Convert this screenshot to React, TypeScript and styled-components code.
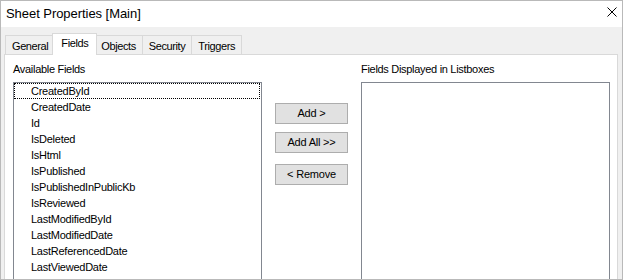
import React from "react";
import styled, { createGlobalStyle } from "styled-components";

const Global = createGlobalStyle`
  html, body { margin: 0; padding: 0; background: #ffffff; }
  * { box-sizing: border-box; }
`;

const Window = styled.div`
  width: 623px;
  height: 280px;
  border: 1px solid #b9b9b9;
  background: #f0f0f0;
  overflow: hidden;
  display: flex;
  flex-direction: column;
  font-family: "Liberation Sans", Arial, sans-serif;
  color: #000;
`;

const TitleBar = styled.div`
  height: 26px;
  flex: none;
  background: #ffffff;
  display: flex;
  align-items: center;
  justify-content: space-between;
  padding: 0 5px 0 5px;
`;

const Title = styled.div`
  font-size: 13px;
  letter-spacing: -0.05px;
  line-height: 16px;
`;

const CloseIcon = styled.svg`
  width: 10px;
  height: 10px;
  align-self: flex-start;
  margin-top: 6px;
`;

const Body = styled.div`
  flex: 1;
  display: flex;
  flex-direction: column;
  padding: 6px 4px 0 3px;
  min-height: 0;
`;

const TabStrip = styled.div`
  display: flex;
  align-items: flex-end;
  height: 21px;
  padding-left: 1px;
  flex: none;
`;

const Tab = styled.div<{ $active?: boolean }>`
  position: relative;
  border: 1px solid #d9d9d9;
  border-bottom: none;
  font-size: 11px;
  line-height: 13px;
  letter-spacing: -0.4px;
  white-space: nowrap;
  background: ${(p) => (p.$active ? "#ffffff" : "#f0f0f0")};
  height: ${(p) => (p.$active ? "22px" : "19px")};
  padding: ${(p) => (p.$active ? "3px 8px 0 8px" : "4px 6px 0 6px")};
  margin: ${(p) => (p.$active ? "0 -2px -1px -3px" : "0 0 0 -1px")};
  z-index: ${(p) => (p.$active ? 2 : 1)};
  &:first-child { margin-left: 0; }
`;

const Panel = styled.div`
  flex: 1;
  background: #ffffff;
  border: 1px solid #d9d9d9;
  padding: 8px 7px 0 8px;
  display: flex;
  gap: 13px;
  min-height: 240px;
`;

const Column = styled.div`
  width: 249px;
  flex: none;
  display: flex;
  flex-direction: column;
`;

const Label = styled.div`
  font-size: 11px;
  line-height: 13px;
  letter-spacing: -0.3px;
  height: 13px;
  margin-bottom: 6px;
`;

const ListBox = styled.div`
  border: 1px solid #828790;
  background: #ffffff;
  height: 220px;
  overflow: hidden;
`;

const ListRow = styled.div<{ $focused?: boolean }>`
  height: 16px;
  border: 1px dotted ${(p) => (p.$focused ? "#000" : "transparent")};
  margin-right: 1px;
  padding-left: 16px;
  font-size: 11px;
  line-height: 14px;
  letter-spacing: -0.25px;
  white-space: nowrap;
`;

const ButtonColumn = styled.div`
  width: 73px;
  flex: none;
  display: flex;
  flex-direction: column;
  padding-top: 40px;
`;

const Button = styled.button<{ $gap?: number }>`
  height: 21px;
  width: 73px;
  margin: ${(p) => p.$gap ?? 0}px 0 0 0;
  padding: 0;
  border: 1px solid #adadad;
  background: #e1e1e1;
  font-family: "Liberation Sans", Arial, sans-serif;
  font-size: 11px;
  letter-spacing: -0.2px;
  color: #000;
  line-height: 19px;
  text-align: center;
`;

const fields = [
  "CreatedById",
  "CreatedDate",
  "Id",
  "IsDeleted",
  "IsHtml",
  "IsPublished",
  "IsPublishedInPublicKb",
  "IsReviewed",
  "LastModifiedById",
  "LastModifiedDate",
  "LastReferencedDate",
  "LastViewedDate",
];

const tabs = ["General", "Fields", "Objects", "Security", "Triggers"];

export default function App() {
  return (
    <>
      <Global />
      <Window>
        <TitleBar>
          <Title>Sheet Properties [Main]</Title>
          <CloseIcon viewBox="0 0 10 10">
            <path d="M0.5 0.5 L9.5 9.5 M9.5 0.5 L0.5 9.5" stroke="#000" strokeWidth="1" fill="none" />
          </CloseIcon>
        </TitleBar>
        <Body>
          <TabStrip>
            {tabs.map((t) => (
              <Tab key={t} $active={t === "Fields"}>
                {t}
              </Tab>
            ))}
          </TabStrip>
          <Panel>
            <Column>
              <Label>Available Fields</Label>
              <ListBox>
                {fields.map((f, i) => (
                  <ListRow key={f} $focused={i === 0}>
                    {f}
                  </ListRow>
                ))}
              </ListBox>
            </Column>
            <ButtonColumn>
              <Button>Add &gt;</Button>
              <Button $gap={8}>Add All &gt;&gt;</Button>
              <Button $gap={11}>&lt; Remove</Button>
            </ButtonColumn>
            <Column>
              <Label>Fields Displayed in Listboxes</Label>
              <ListBox />
            </Column>
          </Panel>
        </Body>
      </Window>
    </>
  );
}
